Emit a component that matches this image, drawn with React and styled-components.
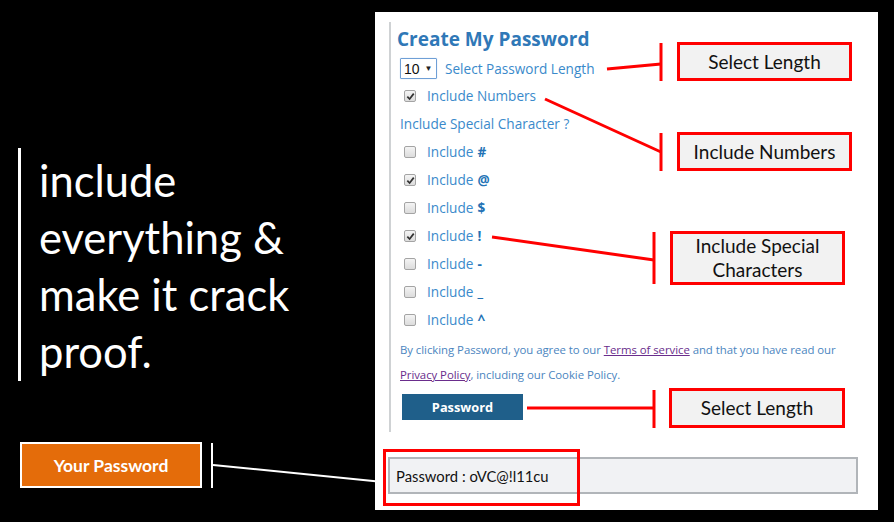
import React from "react";
import styled, { createGlobalStyle } from "styled-components";

const colors = {
  black: "#000000",
  white: "#ffffff",
  title: "#2f78b7",
  label: "#3a8acb",
  symbol: "#2372b5",
  note: "#4b85c0",
  link: "#6a2d8c",
  button: "#1f5f8a",
  orange: "#e46c0a",
  red: "#ff0000",
  callout: "#f2f2f2",
  rule: "#cfd2d4",
};

const GlobalStyle = createGlobalStyle`
  html, body {
    margin: 0;
    padding: 0;
    background: ${colors.black};
  }
  * { box-sizing: border-box; }
`;

const Slide = styled.div`
  position: relative;
  width: 894px;
  height: 522px;
  background: ${colors.black};
  display: flex;
  overflow: hidden;
`;

/* ===== LEFT SIDE ===== */

const LeftColumn = styled.div`
  width: 375px;
  display: flex;
  flex-direction: column;
  padding: 148px 0 0 18px;
`;

const Quote = styled.div`
  height: 233px;
  border-left: 3px solid ${colors.white};
  padding: 4px 0 0 18px;
  color: ${colors.white};
  font-family: Lato, "Open Sans", sans-serif;
  font-size: 43.5px;
  line-height: 57px;
`;

const YourPassword = styled.div`
  margin: 61px 0 0 2px;
  width: 182px;
  height: 46px;
  border: 2px solid ${colors.white};
  background: ${colors.orange};
  color: ${colors.white};
  font-family: Lato, "Open Sans", sans-serif;
  font-weight: 700;
  font-size: 17.5px;
  display: flex;
  align-items: center;
  justify-content: center;
`;

/* ===== FORM PANEL ===== */

const Panel = styled.div`
  width: 503px;
  height: 498px;
  margin-top: 12px;
  background: ${colors.white};
  padding: 10px 20px 0 14px;
  font-family: "Open Sans", sans-serif;
`;

const Form = styled.div`
  border-left: 2px solid ${colors.rule};
  padding: 5px 0 12px 9px;
`;

const Title = styled.div`
  margin-left: -3px;
  color: ${colors.title};
  font-weight: 700;
  font-size: 19px;
  line-height: 24px;
  margin-bottom: 7px;
`;

const LengthRow = styled.div`
  display: flex;
  align-items: center;
  height: 21px;
  margin-bottom: 3px;
`;

const Select = styled.div`
  width: 37px;
  height: 21px;
  border: 1px solid #6f9fd6;
  border-radius: 1px;
  box-shadow: 0 0 1px #9cc1ea;
  display: flex;
  align-items: center;
  padding-left: 3px;
  gap: 5px;
  font-family: "Liberation Sans", Arial, sans-serif;
  font-size: 14px;
  color: #111;
  margin-right: 8px;
`;

const Arrow = styled.span`
  font-size: 8px;
  color: #222;
`;

const Label = styled.span`
  color: ${colors.label};
  font-size: 13.6px;
  line-height: 28px;
`;

const CheckRow = styled.div`
  display: flex;
  align-items: center;
  height: 28px;
  padding-left: 4px;
`;

const Box = styled.span`
  width: 12px;
  height: 12px;
  border: 1px solid #a4a4a4;
  border-radius: 2px;
  background: linear-gradient(#f4f4f4, #dcdcdc);
  margin-right: 11px;
  display: flex;
  align-items: center;
  justify-content: center;
`;

const Symbol = styled.b`
  color: ${colors.symbol};
  font-weight: 700;
  margin-left: 4px;
`;

const Header = styled.div`
  color: ${colors.label};
  font-size: 13.6px;
  line-height: 28px;
  height: 28px;
`;

const Note = styled.p`
  margin: 3px 0 0;
  color: ${colors.note};
  font-size: 11.4px;
  line-height: 25px;
  letter-spacing: -0.05px;
  white-space: nowrap;
`;

const Link = styled.a`
  color: ${colors.link};
  text-decoration: underline;
`;

const SubmitButton = styled.button`
  margin: 7px 0 0 2px;
  width: 121px;
  height: 26px;
  border: none;
  background: ${colors.button};
  color: ${colors.white};
  font-family: "Open Sans", sans-serif;
  font-weight: 700;
  font-size: 12.8px;
  padding: 0;
`;

const Output = styled.div`
  margin: 25px 0 0 -1px;
  width: 470px;
  height: 37px;
  border: 2px solid #b1b5b9;
  background: #f1f2f4;
  padding-left: 6px;
  display: flex;
  align-items: center;
  font-family: Lato, "Open Sans", sans-serif;
  font-size: 14.8px;
  color: #111;
`;

/* ===== ANNOTATIONS ===== */

const Lines = styled.svg`
  position: absolute;
  inset: 0;
  pointer-events: none;
`;

const Callout = styled.div`
  position: absolute;
  left: ${(p) => p.$x}px;
  top: ${(p) => p.$y}px;
  width: ${(p) => p.$w}px;
  height: ${(p) => p.$h}px;
  border: 3px solid ${colors.red};
  background: ${colors.callout};
  color: #111;
  font-family: Lato, "Open Sans", sans-serif;
  font-size: 19px;
  line-height: 24px;
  text-align: center;
  display: flex;
  align-items: center;
  justify-content: center;
`;

const Highlight = styled.div`
  position: absolute;
  left: 383px;
  top: 449px;
  width: 197px;
  height: 57px;
  border: 3px solid ${colors.red};
`;

const Check = () => (
  <svg width="9" height="9" viewBox="0 0 10 10">
    <path d="M1.5 5.2 L4 7.8 L8.6 1.8" fill="none" stroke="#333" strokeWidth="1.9" />
  </svg>
);

const Option = ({ checked, children, symbol }) => (
  <CheckRow>
    <Box>{checked && <Check />}</Box>
    <Label>
      Include{symbol && <Symbol>{symbol}</Symbol>}
      {children}
    </Label>
  </CheckRow>
);

const specials = [
  { s: "#", c: false },
  { s: "@", c: true },
  { s: "$", c: false },
  { s: "!", c: true },
  { s: "-", c: false },
  { s: "_", c: false },
  { s: "^", c: false },
];

export default function App() {
  return (
    <>
      <GlobalStyle />
      <Slide>
        <LeftColumn>
          <Quote>
            include
            <br />
            everything &amp;
            <br />
            make it crack
            <br />
            proof.
          </Quote>
          <YourPassword>Your Password</YourPassword>
        </LeftColumn>

        <Panel>
          <Form>
            <Title>Create My Password</Title>
            <LengthRow>
              <Select>
                10 <Arrow>▼</Arrow>
              </Select>
              <Label>Select Password Length</Label>
            </LengthRow>
            <Option checked>{" Numbers"}</Option>
            <Header>Include Special Character ?</Header>
            {specials.map((o) => (
              <Option key={o.s} checked={o.c} symbol={o.s} />
            ))}
            <Note>
              By clicking Password, you agree to our <Link>Terms of service</Link> and that you have read our
              <br />
              <Link>Privacy Policy</Link>, including our Cookie Policy.
            </Note>
            <SubmitButton>Password</SubmitButton>
          </Form>
          <Output>Password : oVC@!l11cu</Output>
        </Panel>

        <Lines width="894" height="522" viewBox="0 0 894 522">
          <g stroke={colors.red} strokeWidth="3" fill="none">
            <line x1="607" y1="69" x2="661" y2="64" />
            <line x1="661" y1="43" x2="661" y2="81" />
            <line x1="545" y1="99" x2="661" y2="152" />
            <line x1="661" y1="133" x2="661" y2="171" />
            <line x1="492" y1="237" x2="654" y2="260" />
            <line x1="654" y1="232" x2="654" y2="284" />
            <line x1="527" y1="408" x2="654" y2="408" />
            <line x1="654" y1="390" x2="654" y2="428" />
          </g>
          <g stroke={colors.white} strokeWidth="2" fill="none">
            <line x1="212" y1="443" x2="212" y2="488" />
            <line x1="213" y1="465" x2="383" y2="482" />
          </g>
        </Lines>

        <Callout $x={677} $y={42} $w={175} $h={39}>Select Length</Callout>
        <Callout $x={677} $y={132} $w={175} $h={39}>Include Numbers</Callout>
        <Callout $x={670} $y={231} $w={175} $h={54}>
          Include Special
          <br />
          Characters
        </Callout>
        <Callout $x={669} $y={388} $w={176} $h={40}>Select Length</Callout>
        <Highlight />
      </Slide>
    </>
  );
}
